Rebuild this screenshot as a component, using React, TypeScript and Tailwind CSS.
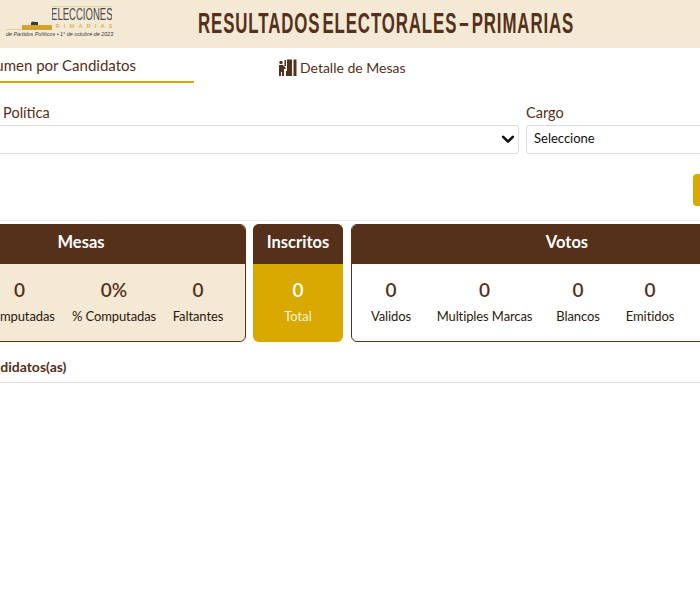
const font = "font-['Lato','Open_Sans',sans-serif]";

function Stat({ value, label, className }: { value: string; label: string; className: string }) {
  return (
    <div className={`flex flex-col items-center shrink-0 ${className}`}>
      <div className="text-[19px] leading-[26px] font-semibold text-[#55301a]">{value}</div>
      <div className="mt-[4px] text-[13px] leading-[18px] tracking-[-0.1px] text-[#2b1a0e] whitespace-nowrap">{label}</div>
    </div>
  );
}

function Logo() {
  return (
    <div className="flex flex-col w-[113px] shrink-0 pt-[6px]">
      <div className="flex items-end w-full">
        <svg width="52" height="24" viewBox="0 0 52 24" className="shrink-0">
          <rect x="6" y="23" width="46" height="1" fill="#e6cf9e" />
          <rect x="22" y="19" width="30" height="5" fill="#d3a332" />
          <path d="M31 19v-2.500l2-1 2 .5h3v3z" fill="#3a3a3a" />
        </svg>
        <div className="w-[60px] border-t border-[#e6cf9e] flex flex-col items-center overflow-hidden">
          <div className="text-[17px] leading-[16px] h-[16px] font-['Liberation_Sans',sans-serif] scale-x-[0.56] text-[#4a4a4a] whitespace-nowrap">ELECCIONES</div>
          <div className="text-[6px] leading-[7px] tracking-[4px] text-[#d3a332] font-['Liberation_Sans',sans-serif] whitespace-nowrap">PRIMARIAS</div>
        </div>
      </div>
      <div className="text-[5.400px] leading-[8px] italic text-[#3a3a3a] whitespace-nowrap font-['Liberation_Sans',sans-serif] pl-[6px]">de Partidos Políticos • 1° de octubre de 2023</div>
    </div>
  );
}

function TableIcon() {
  return (
    <svg width="19" height="17" viewBox="0 0 19 17" fill="#55301a" className="shrink-0">
      <circle cx="3" cy="3.500" r="1.700" />
      <path d="M1 6h4l2.500 2.500V10H6v7H4v-4H3v4H1z" />
      <rect x="6.500" y="1" width="1.500" height="6" />
      <rect x="9" y="0.500" width="5" height="16.500" />
      <rect x="15.500" y="0.500" width="3" height="16.500" />
      <rect x="8" y="12" width="1.500" height="5" />
    </svg>
  );
}

export default function App() {
  return (
    <div className={`w-[700px] h-[600px] overflow-hidden bg-white ${font}`}>
      <header className="h-[48px] bg-[#f4e9d4] flex overflow-hidden">
        <Logo />
        <h1 className="ml-[85px] origin-left scale-x-[0.58] text-[29px] leading-[47px] font-bold font-['Liberation_Sans',sans-serif] text-[#55301a] whitespace-nowrap tracking-[1.550px] [word-spacing:-6px]">RESULTADOS ELECTORALES – PRIMARIAS</h1>
      </header>

      <div className="w-[867px] ml-[-84px]">
        <nav className="flex h-[35px]">
          <div className="w-[278px] h-[35px] border-b-2 border-[#d9a900] pr-[58px] flex items-start justify-end pt-[6px] text-[15px] leading-[22px] text-[#55301a] whitespace-nowrap shrink-0">Resumen por Candidatos</div>
          <div className="ml-[84px] flex items-center gap-[3px] h-[35px] pt-[3px] text-[14px] text-[#55301a] whitespace-nowrap">
            <TableIcon />
            <span>Detalle de Mesas</span>
          </div>
        </nav>

        <div className="mt-[20px] flex gap-[7px]">
          <div className="w-[603px] shrink-0">
            <div className="text-[14.500px] leading-[20px] text-[#55301a]">Organización Política</div>
            <div className="mt-[2px] h-[29px] border border-[#dcdcdc] rounded-[3px] flex items-center justify-end pr-[3px]">
              <svg width="14" height="14" viewBox="0 0 16 16" fill="none" stroke="#111" strokeWidth="3" strokeLinecap="round" strokeLinejoin="round" className="mb-[1px]">
                <path d="M2.500 5.500 8 11l5.500-5.500" />
              </svg>
            </div>
          </div>
          <div className="flex-1">
            <div className="text-[14.500px] leading-[20px] text-[#55301a]">Cargo</div>
            <div className="mt-[2px] h-[29px] border border-[#dcdcdc] rounded-[3px] flex items-center pl-[7px] pb-[2px] text-[13px] text-[#111]">Seleccione</div>
          </div>
        </div>

        <div className="mt-[20px] flex justify-end">
          <div className="w-[90px] h-[32px] bg-[#d9a900] rounded-[4px]" />
        </div>

        <div className="mt-[14px] border-t border-[#eeeeee] pt-[3px] flex items-start">
          <section className="w-[330px] h-[118px] shrink-0 rounded-[6px] border border-[#55301a] overflow-hidden bg-[#f4e9d4] flex flex-col">
            <div className="h-[39px] shrink-0 bg-[#55301a] text-white text-[16.500px] leading-[35px] font-bold text-center">Mesas</div>
            <div className="flex pt-[13px] pl-[50px]">
              <Stat value="0" label="Computadas" className="w-[105px]" />
              <Stat value="0%" label="% Computadas" className="w-[90px] ml-[-3px]" />
              <Stat value="0" label="Faltantes" className="w-[56px] ml-[11px]" />
            </div>
          </section>

          <section className="ml-[7px] w-[90px] h-[118px] shrink-0 rounded-[6px] overflow-hidden bg-[#d9a900] flex flex-col">
            <div className="h-[40px] shrink-0 bg-[#55301a] text-white text-[16.500px] leading-[36px] font-bold text-center">Inscritos</div>
            <div className="flex flex-col items-center pt-[13px]">
              <div className="text-[19px] leading-[26px] font-semibold text-white">0</div>
              <div className="mt-[4px] text-[13px] leading-[18px] text-[#fbf3dc]">Total</div>
            </div>
          </section>

          <section className="ml-[8px] flex-1 h-[118px] rounded-[6px] border border-[#55301a] overflow-hidden bg-white flex flex-col">
            <div className="h-[39px] shrink-0 bg-[#55301a] text-white text-[16.500px] leading-[35px] font-bold text-center">Votos</div>
            <div className="flex pt-[13px] pl-[9px]">
              <Stat value="0" label="Validos" className="w-[60px]" />
              <Stat value="0" label="Multiples Marcas" className="w-[105px] ml-[11px]" />
              <Stat value="0" label="Blancos" className="w-[60px] ml-[11px]" />
              <Stat value="0" label="Emitidos" className="w-[60px] ml-[12px]" />
            </div>
          </section>
        </div>

        <div className="mt-[16px] h-[25px] border-b border-[#dcdcdc] pl-[60px] text-[14px] leading-[18px] font-bold text-[#55301a]">Candidatos(as)</div>
      </div>
    </div>
  );
}
